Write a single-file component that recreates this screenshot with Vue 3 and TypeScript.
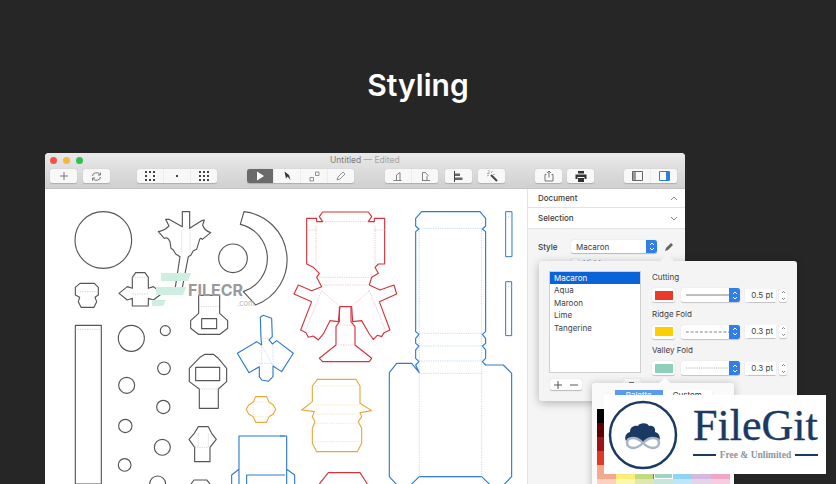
<script setup lang="ts">
const styles = ['Macaron', 'Aqua', 'Maroon', 'Lime', 'Tangerine']

const folds = [
  { label: 'Cutting', color: '#e8392a', dash: 'none', line: '#777', value: '0.5 pt' },
  { label: 'Ridge Fold', color: '#fcd000', dash: '3 2', line: '#777', value: '0.3 pt' },
  { label: 'Valley Fold', color: '#8fd0bc', dash: '1 1', line: '#aaa', value: '0.3 pt' },
]

const palette = [
  ['#000000', '#3a3a3a', '#5e5e5e', '#8a8a8a', '#b5b5b5', '#dcdcdc', '#ffffff'],
  ['#5c0000', '#663c00', '#2f4a10', '#0b4a3c', '#06406e', '#3a1a66', '#661a4a'],
  ['#9e1414', '#a06000', '#4f7a1c', '#137a63', '#0a66ad', '#5b2aa0', '#a02a78'],
  ['#e03a22', '#f0a020', '#7bb83a', '#20b090', '#1a95e8', '#8040d0', '#e040a0'],
  ['#f5a98c', '#fbee77', '#c3d97f', '#9fd3bf', '#8fd4f3', '#d5b8df', '#f0a6c9'],
  ['#fbd2c2', '#fdf6ad', '#dde9b1', '#c7e5da', '#bde6f8', '#e5d3ea', '#f7cce0'],
]
</script>

<template>
  <div class="page">
    <h1 class="title">Styling</h1>

    <div class="window">
      <header class="chrome">
        <div class="titlebar">
          <span class="light red"></span>
          <span class="light yellow"></span>
          <span class="light green"></span>
          <span class="doc-title">Untitled <em>— Edited</em></span>
        </div>
        <div class="toolbar">
          <div class="group w27">
            <button class="tool"><svg width="10" height="10" viewBox="0 0 10 10"><path d="M5 1v8M1 5h8" stroke="#777" fill="none" /></svg></button>
          </div>
          <div class="group w27 gap-s">
            <button class="tool"><svg width="11" height="11" viewBox="0 0 11 11" fill="none" stroke="#777"><path d="M1.500 5A4 3.500 0 0 1 9 3.500M9.500 6A4 3.500 0 0 1 2 7.500" /><path d="M9.500 1.500v2.500H7M1.500 9.500V7H4" /></svg></button>
          </div>
          <div class="group w80 gap-l">
            <button class="tool"><svg width="10" height="10" viewBox="0 0 10 10" fill="#444"><path d="M0 0h2v2H0zM4 0h2v2H4zM8 0h2v2H8zM0 4h2v2H0zM8 4h2v2H8zM0 8h2v2H0zM4 8h2v2H4zM8 8h2v2H8z" /></svg></button>
            <button class="tool"><svg width="10" height="10" viewBox="0 0 10 10" fill="#444"><path d="M4 4h2v2H4z" /></svg></button>
            <button class="tool"><svg width="10" height="10" viewBox="0 0 10 10" fill="#444"><path d="M0 0h2v2H0zM4 0h2v2H4zM8 0h2v2H8zM0 4h2v2H0zM4 4h2v2H4zM8 4h2v2H8zM0 8h2v2H0zM4 8h2v2H4zM8 8h2v2H8z" /></svg></button>
          </div>
          <div class="group w107 gap-xl">
            <button class="tool active"><svg width="10" height="10" viewBox="0 0 10 10"><path d="M2 0.500v9L9 5z" fill="#fff" /></svg></button>
            <button class="tool"><svg width="10" height="10" viewBox="0 0 10 10"><path d="M2.500 0.500l1.500 7 1.500-2 3 3.500-1.500-5z" fill="#333" /></svg></button>
            <button class="tool"><svg width="11" height="11" viewBox="0 0 11 11" fill="none" stroke="#777" stroke-width=".8"><path d="M1 6.500h3.500V10H1zM6.500 1H10v3.500H6.500z" /></svg></button>
            <button class="tool"><svg width="10" height="10" viewBox="0 0 10 10" fill="none" stroke="#777" stroke-width=".8"><path d="M1 9l1-3 5-5 2 2-5 5z" /></svg></button>
          </div>
          <div class="group w53 gap-xl2">
            <button class="tool"><svg width="11" height="11" viewBox="0 0 11 11" fill="none" stroke="#666" stroke-width=".8"><path d="M0.500 9.500h8M7 10V1.500L3.500 4V9" /></svg></button>
            <button class="tool"><svg width="11" height="11" viewBox="0 0 11 11" fill="none" stroke="#666" stroke-width=".8"><path d="M2.500 10V1.500H5.500L8 4.500L7 5.500V9.500M2 9.500h8" /></svg></button>
          </div>
          <div class="group w27 gap-m">
            <button class="tool"><svg width="11" height="11" viewBox="0 0 11 11"><path d="M1.500 0v11" stroke="#444" fill="none" /><path d="M2 2.500h5v2.500H2zM2 6.500h7.500v2.500H2z" fill="#666" /></svg></button>
          </div>
          <div class="group w27 gap-s">
            <button class="tool"><svg width="12" height="12" viewBox="0 0 12 12" fill="none"><path d="M5 5l6 6" stroke="#444" stroke-width="2" /><path d="M3 0v3M1 3.500h2.500M6.500 1L5 3M1 6l2-1M7 4.500h2" stroke="#999" stroke-width=".8" /></svg></button>
          </div>
          <div class="group w27 gap-xl3">
            <button class="tool"><svg width="10" height="12" viewBox="0 0 10 12" fill="none" stroke="#666" stroke-width=".9"><path d="M2.500 4.500H1V11h8V4.500H7.500M5 7.500V1M3 3l2-2 2 2" /></svg></button>
          </div>
          <div class="group w27 gap-xs">
            <button class="tool"><svg width="12" height="11" viewBox="0 0 12 11" fill="#333"><path d="M3 0h6v2.500H3zM0.500 3.500h11V8H9.500V6h-7v2h-2zM3 7h6v4H3z" /></svg></button>
          </div>
          <div class="group w53 gap-xl4">
            <button class="tool"><svg width="11" height="10" viewBox="0 0 11 10"><path d="M0.500 0.500h10v9H0.500z" fill="none" stroke="#666" /><path d="M1 1h3v8H1z" fill="#999" /></svg></button>
            <button class="tool"><svg width="11" height="10" viewBox="0 0 11 10"><path d="M0.500 0.500h10v9H0.500z" fill="none" stroke="#2d7fd6" /><path d="M7 1h3v8H7z" fill="#2d7fd6" /></svg></button>
          </div>
        </div>
      </header>

      <div class="body">
        <div class="canvas">
          <svg class="sheet" width="482" height="295" viewBox="0 0 482 295" fill="none" stroke-linejoin="round">
            <!-- left part of the sheet, grey shapes -->
            <g transform="translate(0 1) scale(.3333)" stroke="#555" stroke-width="3.400">
              <circle cx="175" cy="150" r="85" />
              <circle cx="564" cy="205" r="43" />
              <path d="M597 65A145 145 0 0 1 632 345L595 305A105 105 0 0 0 586 103Z" />
              <path d="M412 65H434V115L470 92L478 90L473 105Q478 122 497 128L472 148Q465 140 462 155L455 178L445 182L438 195L430 200L411 298L391 292L405 200L392 192L385 180L378 175L375 155Q368 140 358 145L340 125Q358 122 372 108L362 88L372 88L412 110Z" />
              <path d="M105 280H148L160 292V315L150 322L155 335L147 352H108L100 335L104 322L91 315V292Z" />
              <path d="M262 262L272 248H300L310 262V295L325 290L352 310L325 330L310 325V348H262V325L247 330L222 310L247 290L262 295Z" />
              <path d="M91 406h78V882H91Z" />
              <circle cx="259" cy="445" r="39" />
              <circle cx="361" cy="422" r="15" />
              <circle cx="357" cy="535" r="19" />
              <circle cx="245" cy="586" r="24" />
              <circle cx="355" cy="651" r="20" />
              <circle cx="241" cy="708" r="20" />
              <circle cx="352" cy="772" r="24" />
              <circle cx="239" cy="825" r="19" />
              <path d="M314 882A24 24 0 0 1 362 882" />
              <path d="M438 882L447 870H485L495 882" />
              <path d="M461 316H524V370L548 392V415L525 433H460L437 415V392L461 370Z" />
              <path d="M470 386h45v30h-45Z" />
              <path d="M465 502L480 493H505L520 505L545 535V575L520 597V655H463V597L433 575V535Z" />
              <path d="M452 532h72v40h-72Z" />
              <path d="M448 730L460 710L490 710L500 730L514 748L495 772V815H449V772L432 748Z" />
            </g>
            <g transform="translate(0 1) scale(.3333)" stroke="#bbb" stroke-width="1.800" stroke-dasharray="4 3">
              <path d="M91 418H169M262 262H310M262 312H310M105 305H155M410 120V190M435 120V190M461 350H524M465 530H520M463 597H520M449 772H495M460 730V770M490 730V770" />
            </g>

            <!-- blue and orange on the left part -->
            <g transform="translate(0 1) scale(.3333)" stroke="#2f7ad1" stroke-width="3.400">
              <path d="M646 382L655 376L680 385L682 440L672 450L682 462L695 452L745 490L710 545L684 528V560L670 574L650 570L643 560V530L612 548L577 490L635 455L650 465L648 445Z" />
              <path d="M582 882V738H720M582 838L560 855V882M605 882V855H720" />
            </g>
            <g transform="translate(0 1) scale(.3333)" stroke="#a9cdf0" stroke-width="1.800" stroke-dasharray="4 3">
              <path d="M645 445H682M650 465L684 528M650 465V530M684 465V528M643 520H684" />
            </g>
            <g transform="translate(0 1) scale(.3333)" stroke="#e8a93c" stroke-width="3.400">
              <path d="M632 620H665L672 636L685 645L692 658L685 672L672 680L665 697H632L625 680L611 672L604 658L611 645L625 636Z" />
            </g>
            <g transform="translate(0 1) scale(.3333)" stroke="#f3d9a6" stroke-width="1.800" stroke-dasharray="4 3">
              <path d="M625 636H672M625 680H672M625 636V680M672 636V680" />
            </g>

            <!-- right part of the sheet -->
            <g transform="translate(235 1) scale(.3333)" stroke="#d3333c" stroke-width="3.400">
              <path d="M80 85H110V95H128L118 80L128 66H265L275 80L265 95H283V85H314V222H295L285 232L295 250L275 262L268 285L300 300L342 285L350 312L298 335L330 420L312 428L305 440L292 436L280 448L268 432L245 392L218 395L215 350H180L175 395L150 392L130 432L115 450L100 438L85 442L78 428L62 420L95 335L42 312L55 285L95 302L125 290L110 262L118 250L100 232L80 222Z" />
              <path d="M178 350V395L168 410V465L118 505L128 515H268L275 505L225 465V410L213 395V350" />
              <path d="M118 882L145 848H240L262 882" />
            </g>
            <g transform="translate(235 1) scale(.3333)" stroke="#eeb0b4" stroke-width="2" stroke-dasharray="4 3">
              <path d="M128 95H265M80 120H110M283 120H314M108 108V225M285 108V225M115 262H275M125 285H268M125 302L180 350M268 302L215 350M125 302L75 425M268 302L318 425M168 465H225M172 405H220" />
            </g>
            <g transform="translate(235 1) scale(.3333)" stroke="#e8a93c" stroke-width="3.400">
              <path d="M112 568H228L240 588V640L275 662L240 668L245 680L235 695L245 715V760L232 785H110L97 760V715L105 695L97 680L103 665L65 660L97 635V588Z" />
            </g>
            <g transform="translate(235 1) scale(.3333)" stroke="#f3d9a6" stroke-width="2" stroke-dasharray="4 3">
              <path d="M105 588H235M105 645H240M105 672H240M105 700H240M105 755H240" />
            </g>
            <g transform="translate(235 1) scale(.3333)" stroke="#2f7ad1" stroke-width="3.400">
              <path d="M425 65H600L617 85V108L607 117L617 125V425L607 433L617 445V460L607 468L617 480V505L607 515L617 525H670L695 550V860L672 884H630L605 860L418 860L393 884H350L328 860V548L350 520H395L418 548L407 525L417 515L407 505V480L417 468L407 460V445L417 433L407 425V125L417 117L407 108V85Z" />
              <path d="M677 65h19v135h-19ZM677 275h18v162h-18Z" stroke-width="3" />
              <path d="M0 738H20V882M20 838L44 855V882" />
            </g>
            <g transform="translate(235 1) scale(.3333)" stroke="#a9cdf0" stroke-width="2" stroke-dasharray="4 3">
              <path d="M417 115H607M417 430H607M417 468H607M417 513H607M417 550H607M418 115V860M605 115V860M418 862H605M677 80H696M677 290H695" />
            </g>
          </svg>
          <div class="watermark">
            <svg width="44" height="36" viewBox="0 0 44 36"><path d="M9 2h30l-3 8H9zM4 16h30l-3 8H4zM0 29h14l-3 6H0z" fill="#cfeee2" /></svg>
            <span class="wm-name">FILECR</span>
            <span class="wm-com">.com</span>
          </div>
        </div>

        <aside class="inspector">
          <div class="section">
            <span>Document</span>
            <svg width="8" height="5" viewBox="0 0 8 5"><path d="M1 4l3-3 3 3" stroke="#888" fill="none" /></svg>
          </div>
          <div class="section sec-second">
            <span>Selection</span>
            <svg width="8" height="5" viewBox="0 0 8 5"><path d="M1 1l3 3 3-3" stroke="#888" fill="none" /></svg>
          </div>
          <div class="style-row">
            <span class="style-label">Style</span>
            <div class="select">
              <span>Macaron</span>
              <span class="stepper-blue"><svg width="6" height="9" viewBox="0 0 6 9"><path d="M1 3l2-2 2 2M1 6l2 2 2-2" stroke="#fff" fill="none" /></svg></span>
            </div>
            <svg width="10" height="10" viewBox="0 0 10 10"><path d="M1 9l1-3 5-5 2 2-5 5z" fill="#666" /></svg>
          </div>
          <div class="hidden-row"><span class="check"></span><span>Hidden</span></div>
        </aside>
      </div>

      <!-- style popover -->
      <div class="popover">
        <div class="pop-left">
          <ul class="style-list">
            <li v-for="(s, i) in styles" :key="s" :class="{ selected: i === 0 }">{{ s }}</li>
          </ul>
          <div class="list-actions">
            <div class="plusminus">
              <button><svg width="8" height="8" viewBox="0 0 8 8"><path d="M4 0v8M0 4h8" stroke="#555" fill="none" /></svg></button>
              <button><svg width="8" height="8" viewBox="0 0 8 8"><path d="M0 4h8" stroke="#555" fill="none" /></svg></button>
            </div>
            <div class="dup">
              <svg width="8" height="8" viewBox="0 0 8 8"><path d="M1 1h5v7H1z" fill="#777" /></svg>
            </div>
          </div>
        </div>
        <div class="pop-right">
          <div v-for="f in folds" :key="f.label" class="fold">
            <div class="fold-label">{{ f.label }}</div>
            <div class="fold-row">
              <span class="well"><span class="well-color" :style="{ background: f.color }"></span></span>
              <span class="line-select">
                <svg width="46" height="4" viewBox="0 0 46 4"><path d="M0 2h46" :stroke="f.line" :stroke-dasharray="f.dash" fill="none" /></svg>
                <span class="stepper-blue"><svg width="6" height="9" viewBox="0 0 6 9"><path d="M1 3l2-2 2 2M1 6l2 2 2-2" stroke="#fff" fill="none" /></svg></span>
              </span>
              <span class="value">{{ f.value }}</span>
              <span class="mini-stepper"><svg width="5" height="11" viewBox="0 0 5 11"><path d="M1 3l1.500-1.500L4 3M1 8l1.500 1.500L4 8" stroke="#666" fill="none" stroke-width=".8" /></svg></span>
            </div>
          </div>
        </div>
      </div>
      <span class="pop-arrow"></span>

      <!-- colour popover -->
      <div class="colors">
        <div class="tabs">
          <span class="tab on">Palette</span>
          <span class="tab">Custom</span>
        </div>
        <div class="swatches">
          <template v-for="(row, r) in palette" :key="r">
            <span v-for="(c, k) in row" :key="k" :class="{ picked: r === 4 && k === 3 }" :style="{ background: c }"></span>
          </template>
        </div>
      </div>
      <span class="colors-arrow"></span>
    </div>

    <div class="filegit">
      <svg width="72" height="72" viewBox="0 0 72 72">
        <circle cx="36" cy="36" r="33" fill="none" stroke="#1b3a63" stroke-width="2.500" />
        <path d="M19 42c-2-4 0-8 4-9c0-5 4-7 8-6c1-3 9-4 11 0c4-1 7 2 6 6c4 1 6 5 4 9c-3-3-7-3-11-1l-5 3l-5-3c-4-2-9-2-12 1Z" fill="#1b3a63" />
        <path d="M36 44c-3-3-6-5-10-5s-6 2-6 5s3 5 6 5s7-2 10-5s6-5 10-5s6 2 6 5s-3 5-6 5s-7-2-10-5Z" fill="none" stroke="#a9b4c2" stroke-width="2.400" />
      </svg>
      <div class="fg-text">
        <div class="fg-name">FileGit</div>
        <div class="fg-sub"><i></i><span>Free &amp; Unlimited</span><i></i></div>
      </div>
    </div>
  </div>
</template>

<style scoped>
.page {
  position: relative;
  width: 836px;
  height: 484px;
  overflow: hidden;
  background: #262626;
  font-family: Inter, "Liberation Sans", sans-serif;
}

.title {
  margin: 0;
  height: 153px;
  padding-top: 66px;
  box-sizing: border-box;
  text-align: center;
  color: #fff;
  font-size: 30px;
  line-height: 38px;
  font-weight: 600;
}

.window {
  position: relative;
  width: 640px;
  height: 331px;
  margin-left: 45px;
  border-radius: 4px 4px 0 0;
  background: #fff;
}

.chrome {
  height: 36px;
  background: linear-gradient(#e9e9e9, #d0d0d0);
  border-radius: 4px 4px 0 0;
  border-bottom: 1px solid #c4c4c4;
  box-sizing: border-box;
}

.titlebar {
  position: relative;
  display: flex;
  align-items: center;
  gap: 6px;
  height: 15px;
  padding: 0 0 0 5px;
}

.light {
  width: 7px;
  height: 7px;
  border-radius: 50%;
}
.red { background: #f0554d; }
.yellow { background: #f5b83a; }
.green { background: #2fc24a; }

.doc-title {
  position: absolute;
  left: 285px;
  top: 2px;
  font-size: 8.500px;
  line-height: 11px;
  color: #7a7a7a;
}
.doc-title em {
  font-style: normal;
  color: #a5a5a5;
}

.toolbar {
  display: flex;
  padding: 1px 0 0 5px;
}

.group {
  display: flex;
  height: 14px;
  border-radius: 2.500px;
  background: #f8f8f8;
  box-shadow: 0 .5px 1px rgba(0, 0, 0, .18);
  overflow: hidden;
}
.w27 { width: 27px; }
.w53 { width: 53px; }
.w80 { width: 80px; }
.w107 { width: 107px; }
.gap-xs { margin-left: 5px; }
.gap-s { margin-left: 6px; }
.gap-m { margin-left: 7px; }
.gap-l { margin-left: 27px; }
.gap-xl { margin-left: 30px; }
.gap-xl2 { margin-left: 31px; }
.gap-xl3 { margin-left: 30px; }
.gap-xl4 { margin-left: 30px; }

.tool {
  flex: 1;
  display: flex;
  align-items: center;
  justify-content: center;
  padding: 0;
  border: 0;
  border-right: 1px solid #ececec;
  background: none;
}
.tool:last-child { border-right: 0; }
.tool.active { background: #6a6a6a; }

.body {
  display: flex;
  height: 295px;
}

.canvas {
  position: relative;
  width: 482px;
  overflow: hidden;
  background: #fff;
}

.sheet { display: block; }

.watermark {
  position: absolute;
  left: 107px;
  top: 82px;
  width: 150px;
  height: 38px;
}
.wm-name {
  position: absolute;
  left: 36px;
  top: 10px;
  font-size: 16px;
  line-height: 18px;
  font-weight: 700;
  color: #9a9a9a;
}
.wm-com {
  position: absolute;
  left: 85px;
  top: 28px;
  font-size: 7.500px;
  line-height: 9px;
  color: #b5b5b5;
}

.inspector {
  flex: 1;
  background: #f5f5f5;
  border-left: 1px solid #e4e4e4;
  font-size: 8px;
  color: #3a3a3a;
}

.section {
  display: flex;
  align-items: center;
  justify-content: space-between;
  height: 18px;
  padding: 0 7px 0 10px;
  background: #fff;
  border-bottom: 1px solid #e2e2e2;
  font-weight: 500;
}
.sec-second { height: 20px; }

.style-row {
  display: flex;
  align-items: center;
  margin-top: 11px;
  padding-left: 10px;
}
.style-label {
  width: 33px;
  font-weight: 500;
}
.select {
  display: flex;
  align-items: center;
  justify-content: space-between;
  width: 86px;
  height: 13px;
  margin-right: 7px;
  padding-left: 5px;
  box-sizing: border-box;
  border-radius: 2.500px;
  background: #fff;
  box-shadow: 0 .5px 1px rgba(0, 0, 0, .25);
}

.stepper-blue {
  display: flex;
  align-items: center;
  justify-content: center;
  width: 11px;
  height: 100%;
  flex: none;
  border-radius: 0 2.500px 2.500px 0;
  background: #2f7fe6;
}

.hidden-row {
  display: flex;
  align-items: center;
  gap: 4px;
  margin: 5px 0 0 43px;
  color: #555;
}
.check {
  width: 8px;
  height: 8px;
  border-radius: 2px;
  background: #fff;
  box-shadow: 0 0 1px rgba(0, 0, 0, .5);
}

.popover {
  position: absolute;
  left: 494px;
  top: 108px;
  width: 258px;
  height: 140px;
  display: flex;
  box-sizing: border-box;
  padding: 10px 0 0 10px;
  border-radius: 3px;
  background: #f4f4f4;
  box-shadow: 0 2px 10px rgba(0, 0, 0, .28);
  font-size: 8px;
  color: #3f3f3f;
}

.pop-arrow {
  position: absolute;
  left: 617px;
  top: 103px;
  width: 10px;
  height: 10px;
  background: #f4f4f4;
  transform: rotate(45deg);
}

.pop-left { width: 92px; }

.style-list {
  height: 102px;
  margin: 0;
  padding: 0;
  box-sizing: border-box;
  list-style: none;
  background: #fff;
  border: 1px solid #cfcfcf;
}
.style-list li {
  height: 12.400px;
  padding-left: 4px;
  line-height: 12.400px;
}
.style-list li.selected {
  background: #0a63d8;
  color: #fff;
}

.list-actions {
  display: flex;
  justify-content: space-between;
  margin-top: 6px;
}
.plusminus {
  display: flex;
  width: 32px;
  height: 11px;
  margin-left: 1px;
  border-radius: 2px;
  background: #fff;
  box-shadow: 0 .5px 1px rgba(0, 0, 0, .25);
}
.plusminus button {
  flex: 1;
  display: flex;
  align-items: center;
  justify-content: center;
  padding: 0;
  border: 0;
  background: none;
}
.dup {
  display: flex;
  align-items: center;
  justify-content: center;
  width: 18px;
  height: 11px;
  border-radius: 2px;
  background: #fff;
  box-shadow: 0 .5px 1px rgba(0, 0, 0, .25);
}

.pop-right {
  margin-left: 11px;
}

.fold { height: 36.600px; }
.fold-label {
  height: 12px;
  line-height: 12px;
}
.fold-row {
  display: flex;
  align-items: center;
  margin-top: 5px;
  height: 14px;
}

.well {
  display: flex;
  align-items: center;
  justify-content: center;
  width: 23px;
  height: 14px;
  border-radius: 2px;
  background: #fff;
  box-shadow: 0 .5px 1px rgba(0, 0, 0, .2);
}
.well-color {
  width: 18px;
  height: 9px;
}

.line-select {
  display: flex;
  align-items: center;
  justify-content: space-between;
  width: 59px;
  height: 14px;
  margin-left: 6px;
  padding-left: 5px;
  box-sizing: border-box;
  border-radius: 2.500px;
  background: #fff;
  box-shadow: 0 .5px 1px rgba(0, 0, 0, .2);
}

.value {
  width: 31px;
  height: 13px;
  margin-left: 5px;
  padding-right: 3px;
  box-sizing: border-box;
  background: #fff;
  box-shadow: 0 .5px 1px rgba(0, 0, 0, .2);
  text-align: right;
  line-height: 13px;
}

.mini-stepper {
  display: flex;
  align-items: center;
  justify-content: center;
  width: 8px;
  height: 13px;
  margin-left: 3px;
  border-radius: 2px;
  background: #fff;
  box-shadow: 0 .5px 1px rgba(0, 0, 0, .2);
}

.colors {
  position: absolute;
  left: 547px;
  top: 230px;
  width: 142px;
  height: 120px;
  box-sizing: border-box;
  padding: 7px 5px 0;
  border-radius: 3px;
  background: #fafafa;
  box-shadow: 0 1px 8px rgba(0, 0, 0, .25);
}

.colors-arrow {
  position: absolute;
  left: 616px;
  top: 226px;
  width: 8px;
  height: 8px;
  background: #fafafa;
  transform: rotate(45deg);
}

.tabs {
  display: flex;
  justify-content: center;
  font-size: 8px;
  line-height: 11px;
  color: #333;
}
.tab {
  width: 48.500px;
  text-align: center;
  background: #fff;
  box-shadow: 0 .5px 1px rgba(0, 0, 0, .2);
}
.tab.on {
  background: #5a9bf0;
  color: #fff;
}

.swatches {
  display: grid;
  grid-template-columns: repeat(7, 19px);
  grid-auto-rows: 14px;
  margin-top: 8px;
}
.swatches .picked {
  box-shadow: inset 0 0 0 1px #fff, 0 0 0 1px #777;
}

.filegit {
  position: absolute;
  left: 604px;
  top: 395px;
  display: flex;
  align-items: center;
  width: 222px;
  height: 79px;
  padding-left: 3px;
  box-sizing: border-box;
  background: #fff;
}

.fg-text {
  margin-left: 14px;
  width: 125px;
}

.fg-name {
  font-family: "Liberation Serif", serif;
  font-size: 44px;
  line-height: 44px;
  color: #1b3a63;
  -webkit-text-stroke: .4px #1b3a63;
  margin-top: -5px;
  white-space: nowrap;
}

.fg-sub {
  display: flex;
  align-items: center;
  justify-content: space-between;
  margin-top: 2px;
  font-family: "Liberation Serif", serif;
  font-size: 9.500px;
  line-height: 11px;
  font-weight: 700;
  color: #8d95a0;
  white-space: nowrap;
}
.fg-sub i {
  width: 23px;
  height: 2px;
  background: #1b3a63;
}
</style>

<style>
html, body {
  margin: 0;
  background: #262626;
}
</style>
